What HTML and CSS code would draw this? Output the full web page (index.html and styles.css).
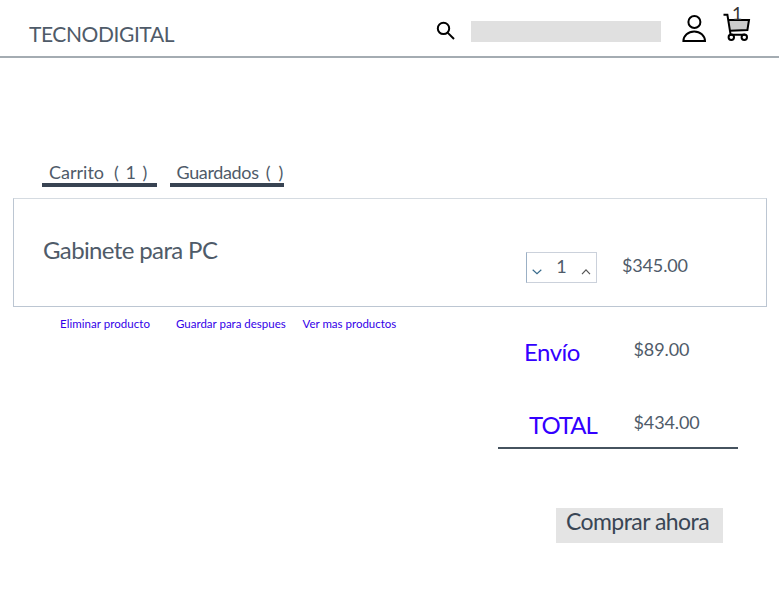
FILE: index.html
```html
<!DOCTYPE html>
<html lang="es">
<head>
<meta charset="utf-8">
<title>Tecnodigital</title>
<link rel="stylesheet" href="styles.css">
</head>
<body>
<header class="header">
  <div class="brand">TECNODIGITAL</div>
  <svg class="search-icon" width="20" height="20" viewBox="0 0 20 20"><circle cx="7.5" cy="7.4" r="5.7"/><path d="M11.6 11.6L18 18"/></svg>
  <div class="search-box"></div>
  <svg class="user-icon" width="26" height="30" viewBox="0 0 26 30"><circle cx="13.4" cy="8" r="6"/><path d="M2.4 27.1C2.4 21.6 7.2 17.4 13.2 17.4S24 21.6 24 27.1Z"/></svg>
  <div class="cart">
    <svg width="30" height="32" viewBox="0 0 30 32"><path class="basket" d="M5 8H26L24.6 18H7Z"/><path d="M.5 2.8H4.4L7.6 22.8H22M5.2 8H26L24.4 18L7 18.8"/><circle cx="8.3" cy="25.3" r="2.7"/><circle cx="21.3" cy="25.3" r="2.7"/></svg>
    <span class="count">1</span>
  </div>
</header>
<main>
  <nav class="tabs">
    <div class="tab"><span>Carrito</span><span class="qty">( 1 )</span></div>
    <div class="tab saved"><span>Guardados</span><span class="qty">(&nbsp; )</span></div>
  </nav>
  <section class="item">
    <h1>Gabinete para PC</h1>
    <div class="stepper">
      <svg width="10" height="6" viewBox="0 0 10 6"><path class="down" d="M.7 .8L5 4.6L9.3 .8"/></svg>
      <span>1</span>
      <svg width="10" height="6" viewBox="0 0 10 6"><path d="M1 5.2L5 .9L9 5.2"/></svg>
    </div>
    <div class="price">$345.00</div>
  </section>
  <div class="links"><a class="remove">Eliminar producto</a><a class="save">Guardar para despues</a><a class="more">Ver mas productos</a></div>
  <section class="summary">
    <div class="row"><span class="label">Envío</span><span class="amount">$89.00</span></div>
    <div class="row total"><span class="label">TOTAL</span><span class="amount">$434.00</span></div>
  </section>
  <button class="buy">Comprar ahora</button>
</main>
</body>
</html>
```
FILE: styles.css
```css
* { box-sizing: border-box; }
body { margin: 0; background: #fff; font-family: Lato, sans-serif; color: #4f5b69; overflow: hidden; }
svg { display: block; flex: none; fill: none; stroke: #000; stroke-width: 2; }
.header { display: flex; align-items: flex-start; height: 58px; border-bottom: 2px solid #a4acb2; }
.brand { width: 407px; margin: 22px 0 0 29px; font-size: 21px; line-height: 24px; letter-spacing: -.42px; }
.search-icon { margin-top: 21px; }
.search-box { width: 190px; height: 21px; margin: 21px 0 0 15px; background: #e0e0e0; }
.user-icon { margin: 14px 0 0 20px; }
.cart { position: relative; margin: 12px 0 0 16px; }
.cart .basket { fill: #ccc; stroke: none; }
.count { position: absolute; left: 9px; top: -9px; font-size: 18px; line-height: 20px; color: #333; }
.tabs { display: flex; gap: 13px; margin: 104px 0 0 42px; }
.tab { display: flex; gap: 10px; width: 114.5px; height: 24.5px; padding-left: 7px; border-bottom: 4.5px solid #384352; font-size: 18px; line-height: 20px; white-space: nowrap; }
.saved { gap: 7px; letter-spacing: -.35px; }
.qty { white-space: pre; word-spacing: 2px; }
.saved .qty { word-spacing: 0; }
.item { display: flex; width: 754px; height: 109px; margin: 11.5px 0 0 13px; border: 1px solid #bcc6d2; border-top-color: #d5dbe1; }
h1 { width: 483px; margin: 36px 0 0 29px; font-size: 24px; font-weight: 400; line-height: 30px; letter-spacing: -.63px; }
.stepper { display: flex; justify-content: space-between; width: 71px; height: 31px; margin-top: 53px; padding: 3px 5px 0; border: 1px solid #cbd1db; border-left-color: #9bb0c5; font-size: 18px; line-height: 20px; }
.stepper svg { margin-top: 13px; stroke: #555; stroke-width: 1.2; }
.stepper .down { stroke: #386b8c; }
.price { margin: 56px 0 0 25px; font-size: 18px; line-height: 20px; letter-spacing: -.15px; }
.links { display: flex; margin: 9px 0 0 60px; font-size: 11.5px; line-height: 16px; color: #3300e8; white-space: nowrap; }
.remove { width: 116px; letter-spacing: .05px; }
.save { width: 126.5px; }
.summary { width: 240px; height: 117px; margin: 0 0 0 498px; border-bottom: 2px solid #46535f; }
.row { display: flex; height: 73px; padding: 5px 0 0 26px; }
.label { width: 109.5px; font-size: 24px; line-height: 30px; letter-spacing: -.5px; color: #30f; }
.amount { font-size: 18px; line-height: 24px; letter-spacing: -.1px; }
.total { height: auto; padding-left: 31px; }
.total .label { width: 104.5px; letter-spacing: -1px; }
.buy { display: block; width: 167px; height: 35px; margin: 59px 0 0 556px; padding: 0 4px 8px 0; border: 0; background: #e4e4e4; color: #394655; font: 23px/27px Lato, sans-serif; letter-spacing: -.55px; white-space: nowrap; }
```
